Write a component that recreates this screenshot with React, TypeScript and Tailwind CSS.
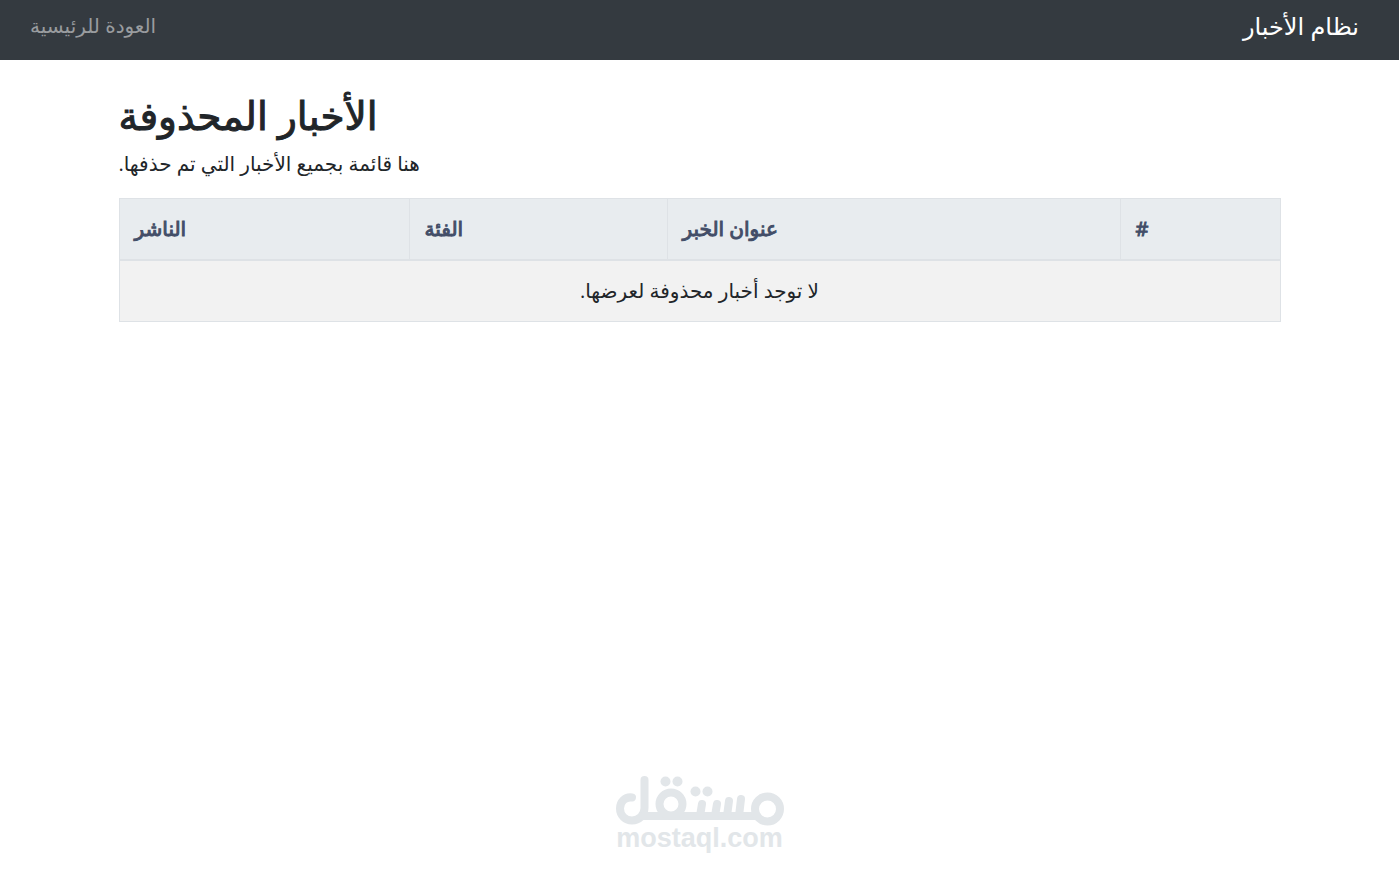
const columns = [
  { label: '#', width: 'w-[160px]' },
  { label: 'عنوان الخبر', width: 'w-auto' },
  { label: 'الفئة', width: 'w-[258px]' },
  { label: 'الناشر', width: 'w-[290px]' },
];

function Watermark() {
  return (
    <footer dir="ltr" className="mt-auto flex flex-col items-center pb-5 text-[#e2e6e9]">
      <svg
        viewBox="0 0 168 50"
        className="h-[50px] w-[168px]"
        fill="none"
        stroke="currentColor"
        strokeLinecap="round"
        strokeWidth="8"
        aria-hidden="true"
      >
        <path d="M16 21.5C9 20.5 4 26 4 32.5C4 39 9 44.5 16 44.5C23 44.5 28.5 39 28.5 32V4" />
        <path d="M27 40H139" />
        <circle cx="55" cy="28" r="11.5" />
        <circle cx="151.5" cy="33" r="12.5" />
        <path d="M84 40L86 28M99 40L101 28M111 40L113 25M123 40L125 23" />
        <g fill="currentColor" stroke="none">
          <circle cx="49.5" cy="5.5" r="5" />
          <circle cx="61.5" cy="5.5" r="5" />
          <circle cx="79.5" cy="15.5" r="5" />
          <circle cx="91.5" cy="15.5" r="5" />
        </g>
      </svg>
      <span className="font-['Liberation_Sans',sans-serif] text-[27px]/[24px] font-bold">mostaql.com</span>
    </footer>
  );
}

export default function App() {
  return (
    <div
      dir="rtl"
      className="flex min-h-screen flex-col bg-white text-left font-['Open_Sans','DejaVu_Sans',sans-serif] text-xl/[30px] text-[#212529]"
    >
      <nav className="flex h-[60px] items-start justify-between bg-[#343a40] px-[30px] pt-[11px]">
        <a href="#" className="px-2.5 text-2xl/[30px] text-white">نظام الأخبار</a>
        <a href="#" className="text-[#999c9f]">العودة للرئيسية</a>
      </nav>

      <main className="mx-auto w-full max-w-[1202px] px-5 pt-[31px]">
        <h1 className="mb-2.5 text-[39px]/[48px] font-normal [-webkit-text-stroke:1px]">الأخبار المحذوفة</h1>
        <p className="mb-[19px]">هنا قائمة بجميع الأخبار التي تم حذفها.</p>
        <table className="w-full table-fixed border-collapse border border-[#dee2e6]">
          <thead>
            <tr className="border-b-2 border-[#dee2e6] bg-[#e8ecef] text-[#434e68]">
              {columns.map((column) => (
                <th
                  key={column.label}
                  scope="col"
                  className={`${column.width} border-x border-[#dee2e6] p-[15px] text-left font-normal [-webkit-text-stroke:1px]`}
                >
                  {column.label}
                </th>
              ))}
            </tr>
          </thead>
          <tbody>
            <tr className="bg-[#f2f2f2]">
              <td colSpan={4} className="p-[15px] text-center">لا توجد أخبار محذوفة لعرضها.</td>
            </tr>
          </tbody>
        </table>
      </main>

      <Watermark />
    </div>
  );
}
